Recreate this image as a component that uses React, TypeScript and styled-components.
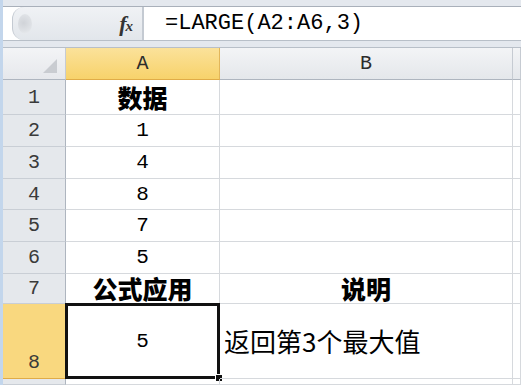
import React from 'react';
import styled, { createGlobalStyle } from 'styled-components';

const GlobalStyle = createGlobalStyle`
  html, body {
    margin: 0;
    padding: 0;
    background: #ffffff;
    overflow: hidden;
  }
`;

const Window = styled.div`
  width: 521px;
  height: 385px;
  box-sizing: border-box;
  border-left: 3px solid #c3d6ec;
  background: #e4e8ee;
  display: flex;
  flex-direction: column;
  overflow: hidden;
`;

const FormulaBar = styled.div`
  margin-top: 6px;
  height: 35px;
  box-sizing: border-box;
  border-top: 1px solid #a9b0ba;
  border-bottom: 1px solid #b8bfc8;
  display: flex;
  background: #ffffff;
`;

const NameBox = styled.div`
  width: 131px;
  margin-left: 9px;
  box-sizing: border-box;
  display: flex;
  align-items: center;
  justify-content: space-between;
  padding: 0 10px 0 5px;
  background: linear-gradient(#f0f2f5, #e2e6eb);
  border-left: 1px solid #c4cad2;
  border-right: 1px solid #c4cad2;
  border-radius: 12px 0 0 12px;
`;

const Knob = styled.div`
  width: 14px;
  height: 20px;
  border-radius: 50%;
  background: radial-gradient(circle at 40% 45%, #d0d3d8 0%, #dfe2e6 60%, #eef0f3 100%);
`;

const Fx = styled.span`
  font-family: 'Liberation Serif', serif;
  font-style: italic;
  font-weight: bold;
  font-size: 22px;
  color: #333;
  letter-spacing: -1px;

  sub {
    font-size: 15px;
    vertical-align: 0;
  }
`;

const FormulaInput = styled.div`
  flex: 1;
  display: flex;
  align-items: center;
  padding-left: 21px;
  font-family: 'Liberation Mono', 'DejaVu Sans Mono', monospace;
  font-size: 22px;
  color: #000;
  border-left: 1px solid #c4cad2;
`;

const Sheet = styled.div`
  margin-top: 6px;
  flex: 1;
  display: grid;
  grid-template-columns: 63px 154px 293px 1fr;
  grid-template-rows: 32px 35px 32px 32px 31px 32px 32px 30px 75px 1fr;
  background: #ffffff;
  border-top: 1px solid #b8bfc8;
`;

const Corner = styled.div`
  background: linear-gradient(#f3f4f6, #e6e8ec);
  border-right: 1px solid #c6cbd2;
  border-bottom: 1px solid #aeb5bf;
  position: relative;

  &::after {
    content: '';
    position: absolute;
    right: 8px;
    bottom: 6px;
    border-style: solid;
    border-width: 0 0 14px 14px;
    border-color: transparent transparent #c9ccd1 transparent;
  }
`;

const ColHead = styled.div<{ $active?: boolean }>`
  display: flex;
  align-items: center;
  justify-content: center;
  font-family: 'Liberation Mono', 'DejaVu Sans Mono', monospace;
  font-size: 20px;
  color: #2c2c2c;
  box-sizing: border-box;
  background: ${p => (p.$active ? 'linear-gradient(#fbe29a, #f7d26b)' : 'linear-gradient(#f3f4f6, #e4e7eb)')};
  border-right: 1px solid ${p => (p.$active ? '#e2b65a' : '#c6cbd2')};
  border-bottom: 1px solid ${p => (p.$active ? '#e0ac47' : '#aeb5bf')};
`;

const RowHead = styled.div<{ $active?: boolean }>`
  display: flex;
  align-items: ${p => (p.$active ? 'flex-end' : 'center')};
  justify-content: center;
  padding-bottom: ${p => (p.$active ? '4px' : '0')};
  font-family: 'Liberation Mono', 'DejaVu Sans Mono', monospace;
  font-size: 20px;
  color: #3a3a3a;
  box-sizing: border-box;
  background: ${p => (p.$active ? '#f9d87f' : '#e5e8ec')};
  border-right: 1px solid ${p => (p.$active ? '#e0ac47' : '#aeb5bf')};
  border-bottom: 1px solid ${p => (p.$active ? '#e0ac47' : '#c9ced5')};
`;

const Cell = styled.div<{ $bold?: boolean; $left?: boolean; $cjk?: boolean }>`
  position: relative;
  display: flex;
  align-items: center;
  justify-content: ${p => (p.$left ? 'flex-start' : 'center')};
  padding-left: ${p => (p.$left ? '4px' : '0')};
  box-sizing: border-box;
  border-right: 1px solid #d6d9dd;
  border-bottom: 1px solid #d6d9dd;
  font-family: ${p =>
    p.$cjk
      ? "'Noto Sans CJK SC', 'Noto Sans', sans-serif"
      : "'Liberation Mono', 'DejaVu Sans Mono', monospace"};
  font-size: ${p => (p.$bold ? '25px' : p.$cjk ? '26px' : '21px')};
  font-weight: ${p => (p.$bold ? 900 : 400)};
  color: #000;
  line-height: 1;
  white-space: nowrap;
`;

const Selection = styled.div`
  position: absolute;
  inset: -1px -1px -1px -1px;
  border: 3px solid #111;
  pointer-events: none;

  &::after {
    content: '';
    position: absolute;
    right: -6px;
    bottom: -6px;
    width: 6px;
    height: 6px;
    background: #111;
    border: 1px solid #fff;
  }
`;

const rows: { n: string; a: string; b?: string; bold?: boolean }[] = [
  { n: '1', a: '数据', bold: true },
  { n: '2', a: '1' },
  { n: '3', a: '4' },
  { n: '4', a: '8' },
  { n: '5', a: '7' },
  { n: '6', a: '5' },
  { n: '7', a: '公式应用', b: '说明', bold: true },
];

export default function App() {
  return (
    <>
      <GlobalStyle />
      <Window>
        <FormulaBar>
          <NameBox>
            <Knob />
            <Fx>f<sub>x</sub></Fx>
          </NameBox>
          <FormulaInput>=LARGE(A2:A6,3)</FormulaInput>
        </FormulaBar>
        <Sheet>
          <Corner />
          <ColHead $active>A</ColHead>
          <ColHead>B</ColHead>
          <ColHead />
          {rows.map(r => (
            <React.Fragment key={r.n}>
              <RowHead>{r.n}</RowHead>
              <Cell $bold={r.bold} $cjk={r.bold}>{r.a}</Cell>
              <Cell $bold={r.bold} $cjk={r.bold}>{r.b}</Cell>
              <Cell />
            </React.Fragment>
          ))}
          <RowHead $active>8</RowHead>
          <Cell>
            5
            <Selection />
          </Cell>
          <Cell $left $cjk>返回第3个最大值</Cell>
          <Cell />
          <RowHead />
          <Cell />
          <Cell />
          <Cell />
        </Sheet>
      </Window>
    </>
  );
}
